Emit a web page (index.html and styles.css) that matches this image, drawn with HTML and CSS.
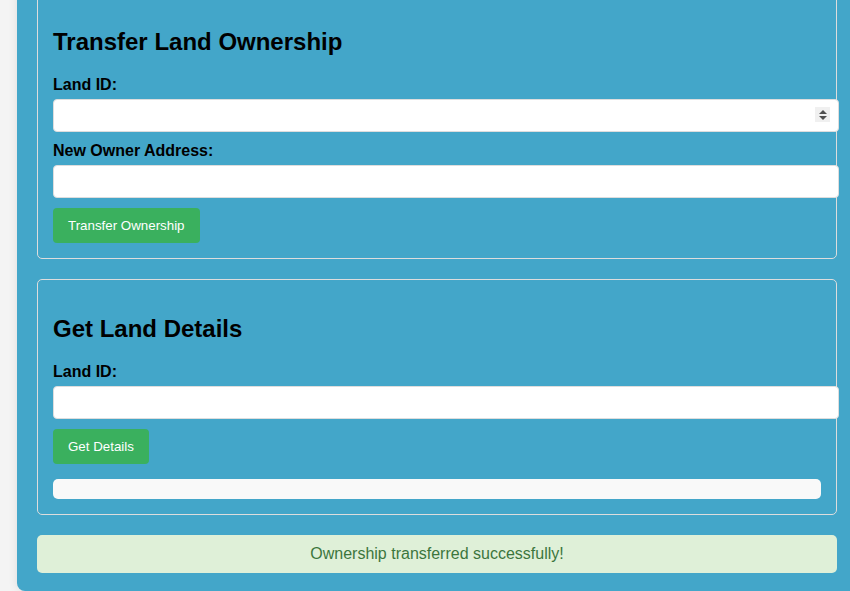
FILE: index.html
```html
<!DOCTYPE html>
<html>
<head>
<meta charset="utf-8">
<link rel="stylesheet" href="styles.css">
</head>
<body>
<div class="container">
  <div class="card">
    <h2>Transfer Land Ownership</h2>
    <label>Land ID:</label>
    <div class="num-wrap">
      <input type="text" class="field">
      <span class="spin"><svg width="10" height="12" viewBox="0 0 10 12"><path d="M5 1 L9 5 L1 5 Z M1 7 L9 7 L5 11 Z" fill="#505050"/></svg></span>
    </div>
    <label>New Owner Address:</label>
    <input type="text" class="field">
    <button class="btn">Transfer Ownership</button>
  </div>
  <div class="card">
    <h2>Get Land Details</h2>
    <label>Land ID:</label>
    <input type="text" class="field">
    <button class="btn">Get Details</button>
    <div class="result"></div>
  </div>
  <div class="message">Ownership transferred successfully!</div>
</div>
</body>
</html>
```
FILE: styles.css
```css
html, body {
  margin: 0;
  padding: 0;
  overflow: hidden;
  height: 591px;
}
body {
  background: #f4f4f4;
  font-family: "Liberation Sans", Arial, sans-serif;
}
.container {
  width: 800px;
  margin: -28px 0 0 17px;
  padding: 20px 20px 18px;
  background: #43a6c9;
  border-radius: 8px;
  box-shadow: 0 0 10px rgba(0,0,0,0.1);
}
.card {
  border: 1px solid #ddd;
  border-radius: 5px;
  padding: 15px;
  margin-bottom: 20px;
}
h2 {
  font-size: 24px;
  margin: 20px 0;
  color: #000;
}
label {
  display: block;
  font-weight: bold;
  font-size: 16px;
  margin-bottom: 5px;
  color: #000;
}
.num-wrap {
  position: relative;
}
.field {
  display: block;
  width: 100%;
  padding: 8px;
  border: 1px solid #ddd;
  border-radius: 4px;
  font-size: 13.33px;
  font-family: "Liberation Sans", Arial, sans-serif;
  line-height: 15px;
  margin: 0 0 10px;
  background: #fff;
  outline: none;
}
.spin {
  position: absolute;
  left: 762px;
  top: 8px;
  width: 15px;
  height: 15px;
  background: #f0f0f0;
  display: flex;
  align-items: center;
  justify-content: center;
}
.btn {
  display: block;
  background: #3ab05e;
  color: #fff;
  border: none;
  border-radius: 4px;
  padding: 10px 15px;
  font-size: 13.33px;
  font-family: "Liberation Sans", Arial, sans-serif;
  line-height: 15px;
}
.result {
  margin-top: 15px;
  padding: 10px;
  background: #f9f9f9;
  border-radius: 5px;
}
.message {
  background: #dff0d8;
  color: #3c763d;
  text-align: center;
  padding: 10px;
  border-radius: 5px;
  font-size: 16px;
  line-height: 18px;
}
```
